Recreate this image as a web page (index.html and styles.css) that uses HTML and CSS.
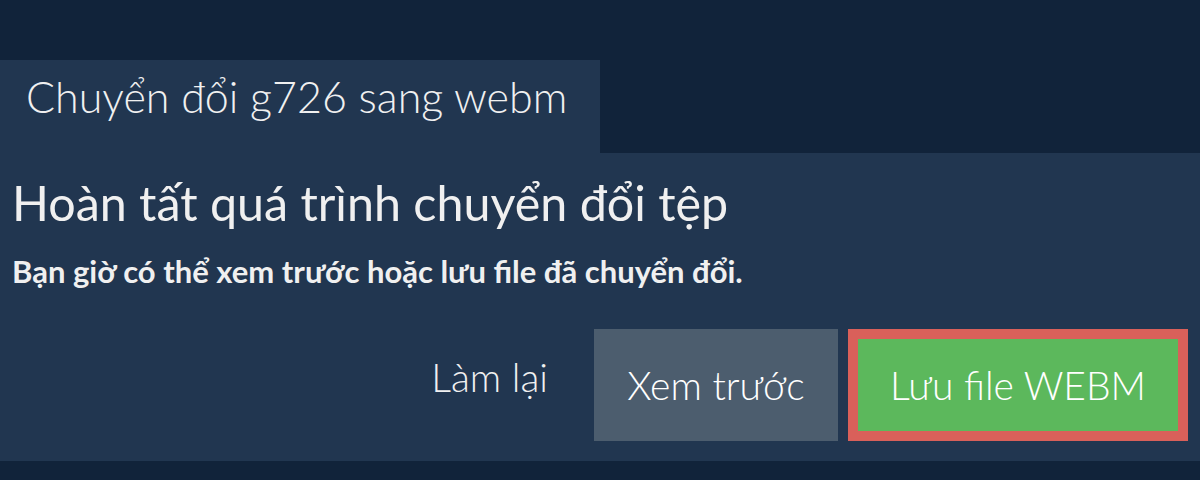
FILE: index.html
```html
<!DOCTYPE html>
<html lang="vi">
<head>
<meta charset="utf-8">
<title>Chuyển đổi g726 sang webm</title>
<link rel="stylesheet" href="styles.css">
</head>
<body>
<div class="page">
  <div class="tab">Chuyển đổi g726 sang webm</div>
  <div class="panel">
    <h1 class="heading">Hoàn tất quá trình chuyển đổi tệp</h1>
    <p class="subtitle">Bạn giờ có thể xem trước hoặc lưu file đã chuyển đổi.</p>
    <div class="actions">
      <button class="btn btn-reset">Làm lại</button>
      <button class="btn btn-preview">Xem trước</button>
      <button class="btn btn-save">Lưu file WEBM</button>
    </div>
  </div>
</div>
</body>
</html>
```
FILE: styles.css
```css
html, body {
  margin: 0;
  padding: 0;
  background: #11233a;
}
body {
  font-family: Lato, "Noto Sans", sans-serif;
  color: #f0f0f0;
  width: 1200px;
  height: 480px;
  overflow: hidden;
}
.page {
  padding-top: 60px;
}
.tab {
  box-sizing: border-box;
  width: 600px;
  height: 93px;
  padding: 13px 25px 0 26px;
  background: #213650;
  font-size: 43px;
  font-weight: 300;
  line-height: 48px;
  white-space: nowrap;
}
.panel {
  background: #213650;
  padding: 21px 12px 20px 12px;
}
.heading {
  margin: 0;
  font-size: 48.4px;
  font-weight: 400;
  line-height: 56px;
}
.subtitle {
  margin: 24px 0 0 0;
  font-size: 31px;
  font-weight: 700;
  line-height: 34px;
}
.actions {
  margin-top: 41px;
  display: flex;
  justify-content: flex-end;
  align-items: stretch;
  gap: 10px;
}
.btn {
  font-family: inherit;
  color: #ffffff;
  font-size: 39px;
  font-weight: 300;
  line-height: 48px;
  border: none;
  margin: 0;
  cursor: pointer;
}
.btn-reset {
  background: transparent;
  color: #f0f0f0;
  padding: 24px 36px 0 0;
  align-self: flex-start;
  height: 112px;
  box-sizing: border-box;
  display: flex;
  align-items: flex-start;
}
.btn-preview {
  box-sizing: border-box;
  width: 244px;
  height: 112px;
  background: #4c5d6e;
  padding: 0;
}
.btn-save {
  box-sizing: border-box;
  width: 340px;
  height: 112px;
  background: #5cb85c;
  border: 10px solid #d9605a;
  padding: 0;
}
```
